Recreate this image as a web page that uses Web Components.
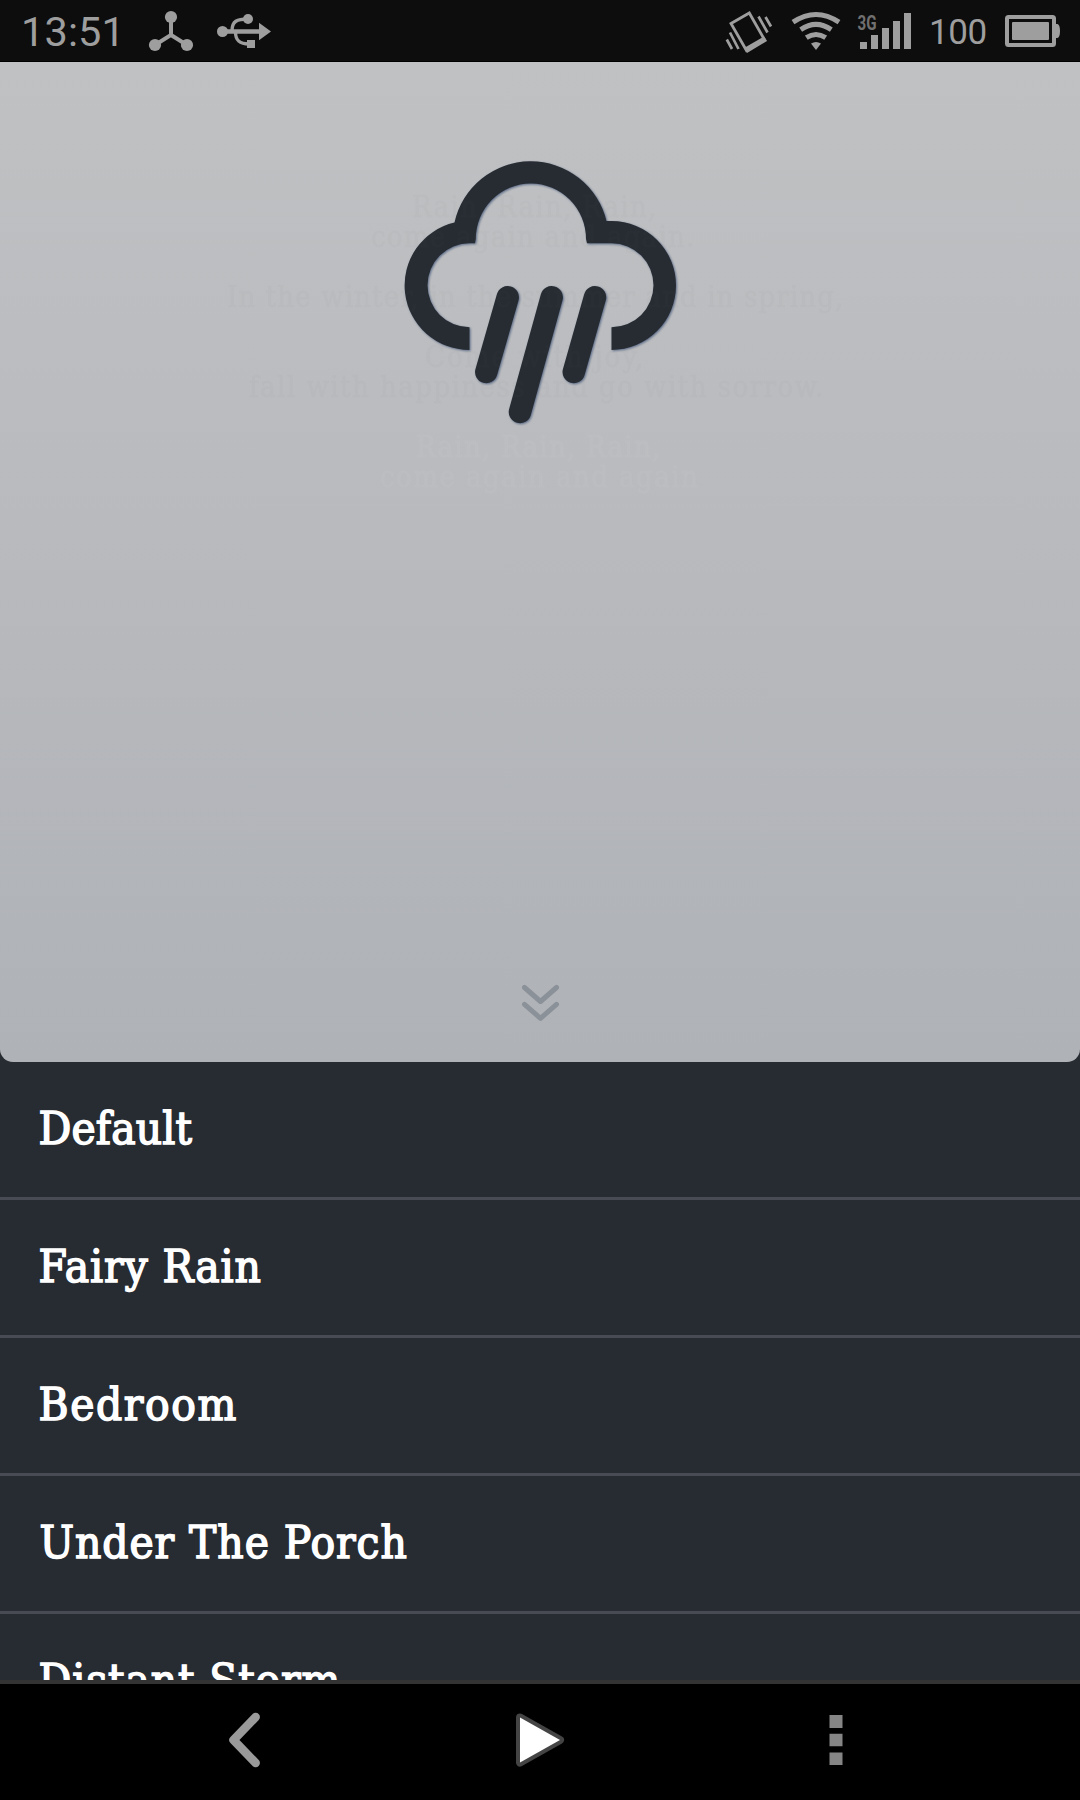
<!DOCTYPE html>
<html lang="en"><head><meta charset="utf-8"><title>Rain</title>
<style>html,body{margin:0;background:#000}</style></head>
<body><rain-app></rain-app>
<script>
const define=(name,html,init)=>customElements.define(name,class extends HTMLElement{
  connectedCallback(){
    if(this.shadowRoot)return;
    const t=document.createElement('template');t.innerHTML=html;
    this.attachShadow({mode:'open'}).append(t.content.cloneNode(true));
    if(init)init(this,this.shadowRoot);
  }
});

/* Spaces its letters so that the inked part of a line is "ink" pixels wide */
define('fit-text','<style>:host{display:block;white-space:nowrap}span{display:inline-block}</style><span></span>',(el,root)=>{
  const s=root.querySelector('span'),txt=el.getAttribute('text'),ink=+el.getAttribute('ink');
  s.textContent=txt;
  const c=getComputedStyle(el),g=document.createElement('canvas').getContext('2d');
  g.font=`${c.fontWeight} ${c.fontSize} ${c.fontFamily}`;
  const m=g.measureText(txt),w=m.actualBoundingBoxLeft+m.actualBoundingBoxRight;
  const ls=(ink-w)/(txt.length-1);
  s.style.letterSpacing=ls+'px';
  s.style.marginLeft=m.actualBoundingBoxLeft+'px';
  s.style.marginRight=-ls+'px';
});

define('status-bar',`<style>
:host{display:flex;box-sizing:border-box;height:62px;background:#0d0d0d;border-bottom:1px solid #000;color:#9e9e9e;font-family:Roboto,sans-serif;justify-content:space-between;padding:0 19px 0 24px}
div{display:flex;height:61px}
svg{display:block;flex:none;fill:#9e9e9e;stroke:none}
.l{fill:none;stroke:#9e9e9e}
.time{font-size:41.5px;line-height:64px;width:123px}
.pct{font-size:35px;line-height:65px;width:73px}
</style>
<div><fit-text class="time" text="13:51" ink="92.5"></fit-text>
<svg width="68" height="61" viewBox="147 0 68 61"><circle cx="171" cy="17" r="6.1"/><circle cx="155" cy="45" r="6.1"/><circle cx="187" cy="45" r="6.1"/><path class="l" stroke-width="4" d="M171 17V35L155 45M171 35L187 45"/></svg>
<svg width="60" height="61" viewBox="215 0 60 61"><circle cx="222.5" cy="31.5" r="5.5"/><circle cx="248" cy="19" r="5"/><path d="M259 22.7L271 31.5L259 40.3ZM247 40h8v8h-8z"/><path class="l" stroke-width="4.6" d="M222 31.5H261"/><path class="l" stroke-width="3.4" d="M232 31C232 21 237 19 248 19M235.5 32C235.5 41 240 44 249 44"/></svg></div>
<div><svg width="56" height="61" viewBox="722 0 56 61"><path class="l" stroke-width="2.8" d="M731 23.5L749.3 13L764.7 40L746.5 50.5Z"/><path d="M744 48L764 36.5L767 41L747 53Z"/><path class="l" stroke-width="2.7" d="M726.8 39.5L732 49M730 32.5L738.5 49M758.5 16.5L767.5 32.5M765.5 17L771 26.5"/></svg>
<svg width="66" height="61" viewBox="778 0 66 61"><path class="l" stroke-width="5" d="M793 22.2Q816 6.8 839 22.2M800.7 29.6Q816 19.2 831.3 29.6M806.3 37.7Q816 31.3 825.7 37.7"/><path d="M811 43.5Q816 40.5 821 43.5L816 50Z"/></svg>
<svg width="87" height="61" viewBox="844 0 87 61"><path d="M860 42h7v7h-7zM871 35h7v14h-7zM882 28h7v21h-7zM893 21h7v28h-7zM904 13h7v36h-7z"/><text x="857.5" y="29.5" font-family="Roboto,sans-serif" font-weight="700" font-size="21" textLength="19" lengthAdjust="spacingAndGlyphs" fill="#707070">3G</text></svg>
<fit-text class="pct" text="100" ink="54.5"></fit-text>
<svg width="57" height="61" viewBox="1004 0 57 61"><rect class="l" x="1007" y="17" width="47" height="28" rx="1.5" stroke-width="4"/><rect x="1012" y="22" width="37" height="18" rx="1"/><path d="M1055 24h2.5Q1060 25 1060 31T1057.500 38H1055z"/></svg></div>`);

define('rain-cloud',`<style>:host{display:block;filter:drop-shadow(1px 1px 1px #5c6c88)}svg{display:block;overflow:visible}</style>
<svg width="272" height="264" viewBox="405 161 272 264"><path fill="#272c33" stroke="none" d="M469.500 350A64.600 64.600 0 0 1 454.500 222.500A78 78 0 0 1 606.500 221H611.500A64.500 64.500 0 0 1 611.500 350V327.300A42 42 0 0 0 611.500 243.300H587L586 239A55.100 55.600 0 0 0 475.800 239L475 243.300H469.500A42 42 0 0 0 469.500 327.300Z"/>
<path fill="none" stroke="#272c33" stroke-width="22.5" stroke-linecap="round" d="M507.700 297.300L486.300 372M551.700 297.300L520 412M595 297.300L573.800 372"/></svg>`);

define('ghost-poem',`<style>
:host{display:block;opacity:.03;font:29px/30px "DejaVu Serif Condensed","DejaVu Serif",serif;color:#707070;-webkit-text-stroke:.8px}
div{display:flex;flex-direction:column}
fit-text{height:30px}.gap{height:30px}.lite{color:#fff}
</style><div>
<fit-text style="margin-left:413px" text="Rain, Rain, Rain," ink="241"></fit-text>
<fit-text style="margin-left:372px" text="come again and again." ink="320"></fit-text><i class="gap"></i>
<fit-text style="margin-left:228px" text="In the winter, in the summer and in spring," ink="613"></fit-text><i class="gap"></i>
<fit-text style="margin-left:426px" text="Come with joy," ink="215"></fit-text>
<fit-text style="margin-left:249px" text="fall with happiness and go with sorrow." ink="572"></fit-text><i class="gap"></i>
<fit-text class="lite" style="margin-left:417px" text="Rain, Rain, Rain," ink="241"></fit-text>
<fit-text class="lite" style="margin-left:381px" text="come again and again" ink="317"></fit-text></div>`);

define('rain-panel',`<style>
:host{display:flex;position:relative;box-sizing:border-box;height:1000px;flex-direction:column;justify-content:space-between;padding:99px 0 41px;border-radius:0 0 13px 13px;background:linear-gradient(#c0c1c3,#afb2b7)}
rain-cloud{margin-left:405px}
ghost-poem{position:absolute;left:0;top:130px}
svg{display:block;margin-left:520px}
</style><rain-cloud></rain-cloud><ghost-poem></ghost-poem>
<svg width="41" height="40" viewBox="520 981 41 40" fill="none" stroke="#8b9198" stroke-width="5" stroke-linecap="round" stroke-linejoin="round"><path d="M524.500 987.500L540.500 1001.500L556.500 987.500M524.500 1004.300L540.500 1018.300L556.500 1004.300"/></svg>`);

define('sound-item',`<style>:host{display:block;box-sizing:border-box;height:138px;flex:none;border-bottom:3px solid #484b53;padding-left:40.500px;color:#fff;font:45.500px/133px "DejaVu Serif Condensed","DejaVu Serif",serif}fit-text{-webkit-text-stroke:1.500px #fff}</style>`,
(el,root)=>{const n=document.createElement('fit-text');n.setAttribute('text',el.getAttribute('name'));n.setAttribute('ink',el.getAttribute('ink'));root.append(n);});

define('sound-list',`<style>:host{display:flex;flex-direction:column;height:618px;overflow:hidden}</style><slot></slot>`);

define('nav-bar',`<style>:host{display:flex;box-sizing:border-box;height:120px;border-top:4px solid #333;background:#000;padding-left:224px}svg{display:block;flex:none}</style>
<svg width="280" height="116" viewBox="224 1684 280 116"><path fill="none" stroke="#9a9a9a" stroke-width="8.500" stroke-linecap="round" stroke-linejoin="round" d="M255.700 1717L233.500 1740L255.700 1763"/></svg>
<svg width="310" height="116" viewBox="504 1684 310 116"><path fill="#444" stroke="#444" stroke-width="8" stroke-linejoin="round" d="M520 1717.500L560 1740L520 1762.500Z"/><path fill="#fff" stroke="none" d="M520 1717.500L560 1740L520 1762.500Z"/></svg>
<svg width="44" height="116" viewBox="814 1684 44 116"><path fill="#858585" d="M829.500 1715h13v13h-13zM829.500 1733.700h13v12.600h-13zM829.500 1752.500h13v12.500h-13z"/></svg>`);

define('rain-app',`<style>:host{display:flex;flex-direction:column;width:1080px;height:1800px;overflow:hidden;background:#272c33}</style>
<status-bar></status-bar><rain-panel></rain-panel>
<sound-list><sound-item name="Default" ink="152"></sound-item><sound-item name="Fairy Rain" ink="220"></sound-item><sound-item name="Bedroom" ink="195"></sound-item><sound-item name="Under The Porch" ink="366"></sound-item><sound-item name="Distant Storm" ink="299"></sound-item></sound-list>
<nav-bar></nav-bar>`);
</script></body></html>
